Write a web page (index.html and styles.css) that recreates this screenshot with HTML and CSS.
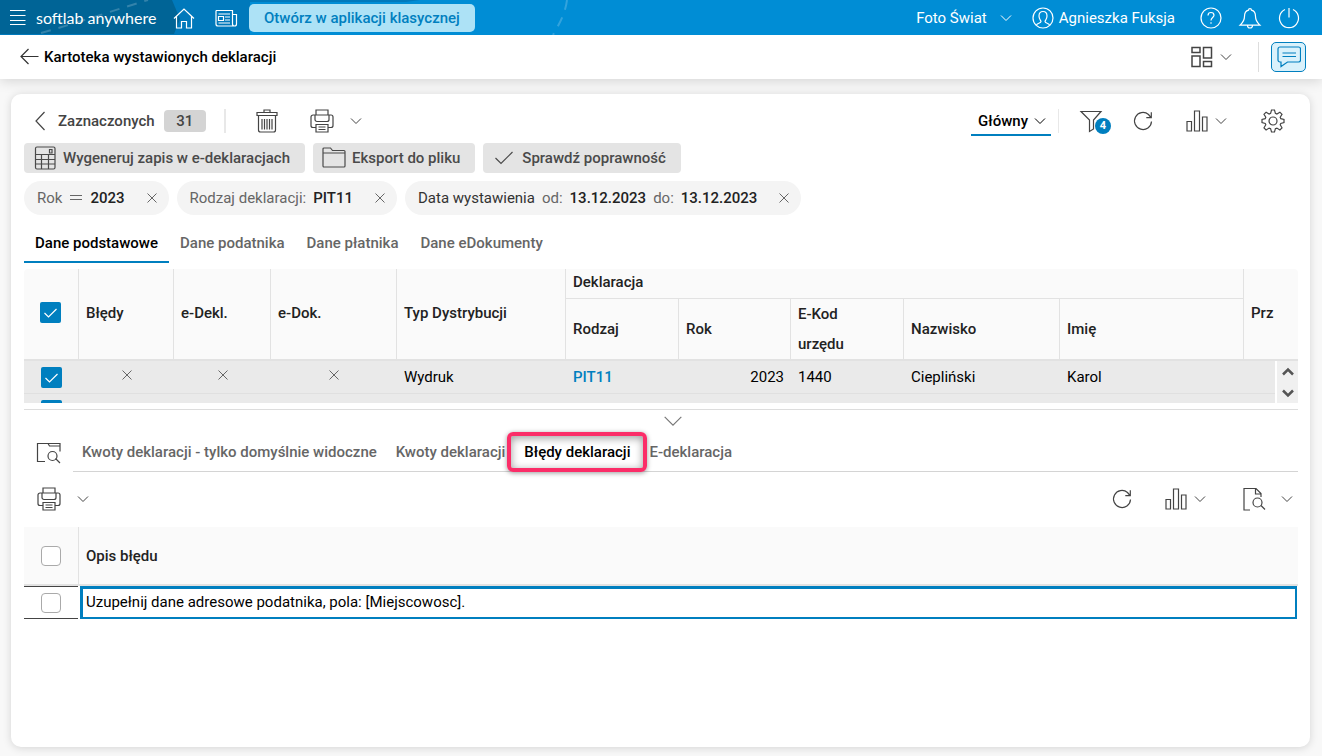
FILE: index.html
```html
<!DOCTYPE html>
<html lang="pl">
<head>
    <meta charset="utf-8">
    <title>Kartoteka wystawionych deklaracji</title>
    <link rel="stylesheet" href="styles.css">
</head>
<body>
    <!-- icon set -->
    <svg class="icon-set" aria-hidden="true">
        <symbol id="i-menu" viewBox="0 0 24 24"><path d="M4 4.500h15.500M4 9.500h15.500M4 14.500h15.500M4 18.500h15.500"/></symbol>
        <symbol id="i-home" viewBox="0 0 24 24"><path d="M2 12.500 12 3l10 9.500M4.500 10.500V22h5v-6.500h5V22h5V10.500"/></symbol>
        <symbol id="i-news" viewBox="0 0 24 24"><path d="M2 4.500h16.500V18a2 2 0 0 0 4 0V8.500h-4M2 4.500V18a2 2 0 0 0 2 2h16.500M4.500 8h11.500M4.500 10.500h5v4h-5zM11 11h5M11 14h5M4.500 17h11.500"/></symbol>
        <symbol id="i-down" viewBox="0 0 12 12"><path d="M1 3.500 6 8.500 11 3.500"/></symbol>
        <symbol id="i-user" viewBox="0 0 24 24"><circle cx="12" cy="12" r="10"/><path d="M5.500 19c.5-2 4.500-1.500 4.500-3.500 0-1-2-2-2-5.500 0-3 1.500-4.500 4-4.500s4 1.500 4 4.500c0 3.500-2 4.500-2 5.500 0 2 4 1.500 4.500 3.500"/></symbol>
        <symbol id="i-help" viewBox="0 0 24 24"><circle cx="12" cy="12" r="10"/><path d="M9 9.500C9 7.500 10.200 6.500 12 6.500s3 1.200 3 2.800c0 2.200-3 2.400-3 5.200M12 16.300v1.500"/></symbol>
        <symbol id="i-bell" viewBox="0 0 24 24"><path d="M10.500 4.200a1.500 1.500 0 0 1 3 0c3 .8 4 3 4 6 0 5 2 6.500 4.500 9H2c2.500-2.500 4.500-4 4.500-9 0-3 1-5.200 4-6zM9.500 19.500a2.500 2.500 0 0 0 5 0"/></symbol>
        <symbol id="i-power" viewBox="0 0 24 24"><path d="M12 2v9.500M8 3.500a9.500 9.500 0 1 0 8 0"/></symbol>
        <symbol id="i-back" viewBox="0 0 24 24"><path d="M21.500 11.500H4M11.500 4 4 11.500l7.500 7.500"/></symbol>
        <symbol id="i-layout" viewBox="0 0 24 24"><path d="M2 2.500h8v5H2zM2 11h8v10.500H2zM13.500 2.500h8V13h-8zM13.500 16.500h8v5h-8z"/></symbol>
        <symbol id="i-chat" viewBox="0 0 24 24"><path d="M3 2h18.500a2 2 0 0 1 2 2v11a2 2 0 0 1-2 2H10.500L4 21.500V17H3a2 2 0 0 1-2-2V4a2 2 0 0 1 2-2zM5.500 8h13.500M5.500 11.500h13.500"/></symbol>
        <symbol id="i-left" viewBox="0 0 12 24"><path d="M10.500 3 2 12l8.500 9"/></symbol>
        <symbol id="i-trash" viewBox="0 0 24 24"><path d="M2 3.500h20v3H2zM9 3.500V1h6v2.500M3.500 6.500V21a2 2 0 0 0 2 2h13a2 2 0 0 0 2-2V6.500M7 10v10.500M9.500 10v10.500M12 10v10.500M14.500 10v10.500M17 10v10.500"/></symbol>
        <symbol id="i-printer" viewBox="0 0 24 24"><path d="M6 6V1h12v5M5 6h14v4.500a2 2 0 0 1-2 2H7a2 2 0 0 1-2-2zM5 6H3a2 2 0 0 0-2 2v8.500a2 2 0 0 0 2 2h3M19 6h2a2 2 0 0 1 2 2v8.500a2 2 0 0 1-2 2h-3M6 15.500h12v7.500H6zM8.500 18h7M8.500 20.500h7"/></symbol>
        <symbol id="i-filter" viewBox="0 0 24 24"><path d="M2 2.500h20L14.500 11v9l-4 2.500V11z"/></symbol>
        <symbol id="i-refresh" viewBox="0 0 24 24"><path d="M20.500 12.500a8.500 8.500 0 1 1-3-7l2.500 3M20.300 3.300V8.700h-5"/></symbol>
        <symbol id="i-chart" viewBox="0 0 24 24"><path d="M2 12.500h4.500v9.500H2zM9.500 2h5v20h-5zM17.500 8h4.500v14h-4.500z"/></symbol>
        <symbol id="i-gear" viewBox="0 0 24 24"><circle cx="12" cy="12" r="4"/><path d="M9.600 4.300 10.500 1h3l.9 3.300 1.500.7 3-1.800 2.100 2.100L19.200 8.300l.6 1.400 3.200.8v3l-3.200.9-.6 1.400 1.800 3-2.100 2.100-3-1.800-1.500.6-.9 3.300h-3l-.9-3.300-1.500-.6-3 1.800L3 18.800l1.800-3-.6-1.400L1 13.500v-3l3.200-.8.6-1.400L3 5.300l2.100-2.100 3 1.800z"/></symbol>
        <symbol id="i-calc" viewBox="0 0 24 24"><rect x="2.500" y="1" width="19.500" height="22" rx="1.500"/><path d="M2.500 8.500H22M2.500 13.500H22M2.500 18H22M8.500 8.500V23M15.500 8.500V23M16.500 3.500h2.500v3.500h-2.500z"/></symbol>
        <symbol id="i-folder" viewBox="0 0 24 24"><path d="M1 20V3a1 1 0 0 1 1-1h6.500L10.500 4.500H22a1 1 0 0 1 1 1V20a1 1 0 0 1-1 1H2a1 1 0 0 1-1-1zM1 7h22"/></symbol>
        <symbol id="i-check" viewBox="0 0 24 24"><path d="M3.500 12 9 17.500 20.500 6"/></symbol>
        <symbol id="i-x" viewBox="0 0 12 12"><path d="M1.500 1.500l9 9M10.500 1.500l-9 9"/></symbol>
        <symbol id="i-equal" viewBox="0 0 14 12"><path d="M1 3.500h12M1 7.500h12"/></symbol>
        <symbol id="i-preview" viewBox="0 0 26 24"><path d="M9 20.500H1.500V2.500h10.500l1.500 2.500H24M12 2.500h12v8M19.500 17.500l4.500 4.500"/><circle cx="16.500" cy="15" r="4.500"/></symbol>
        <symbol id="i-doc" viewBox="0 0 24 24"><path d="M8 23H2V1.500h12l5 5V10M13.500 1.500V7H19M19 18.500l4 4"/><circle cx="15.500" cy="15.500" r="4.500"/></symbol>
    </svg>

    <header class="topbar">
        <svg class="topbar-art" aria-hidden="true">
            <path fill="#0079bb" d="M0 0h420l-14 2H250v33H0z"/>
            <path fill="#006496" d="M0 0h172l8 19-6 15H0z"/>
            <path class="dashes" d="M41 33C80 22 115 10 148 0M567 0c-2 15-8 24-14 35"/>
        </svg>
        <button class="btn menu" aria-label="Menu"><svg class="icon"><use href="#i-menu"/></svg></button>
        <a class="logo" href="#">softlab anywhere</a>
        <a class="top-link home" href="#" aria-label="Start"><svg class="icon"><use href="#i-home"/></svg></a>
        <a class="top-link news" href="#" aria-label="Aktualności"><svg class="icon"><use href="#i-news"/></svg></a>
        <button class="classic">Otwórz w aplikacji klasycznej</button>
        <div class="top-right">
            <button class="btn company">Foto Świat <svg class="arrow"><use href="#i-down"/></svg></button>
            <button class="btn user"><svg class="icon"><use href="#i-user"/></svg>Agnieszka Fuksja</button>
            <div class="top-icons">
                <button class="btn" aria-label="Pomoc"><svg class="icon"><use href="#i-help"/></svg></button>
                <button class="btn" aria-label="Powiadomienia"><svg class="icon"><use href="#i-bell"/></svg></button>
                <button class="btn" aria-label="Wyloguj"><svg class="icon"><use href="#i-power"/></svg></button>
            </div>
        </div>
    </header>

    <div class="titlebar">
        <a class="back" href="#" aria-label="Wstecz"><svg class="icon"><use href="#i-back"/></svg></a>
        <h1>Kartoteka wystawionych deklaracji</h1>
        <button class="btn layout" aria-label="Układ"><svg class="icon"><use href="#i-layout"/></svg><svg class="arrow"><use href="#i-down"/></svg></button>
        <button class="chat" aria-label="Czat"><svg class="icon"><use href="#i-chat"/></svg></button>
    </div>

    <main class="card">
        <div class="toolbar">
            <button class="btn selected"><svg class="icon left"><use href="#i-left"/></svg>Zaznaczonych <span class="count">31</span></button>
            <span class="sep"></span>
            <button class="btn trash" aria-label="Usuń"><svg class="icon"><use href="#i-trash"/></svg></button>
            <button class="btn print" aria-label="Drukuj"><svg class="icon"><use href="#i-printer"/></svg><svg class="arrow"><use href="#i-down"/></svg></button>
            <div class="toolbar-right">
                <button class="btn view">Główny <svg class="arrow"><use href="#i-down"/></svg></button>
                <span class="sep thin"></span>
                <button class="btn filter" aria-label="Filtry"><svg class="icon"><use href="#i-filter"/></svg><span class="dot">4</span></button>
                <button class="btn refresh" aria-label="Odśwież"><svg class="icon"><use href="#i-refresh"/></svg></button>
                <button class="btn chart" aria-label="Wykres"><svg class="icon"><use href="#i-chart"/></svg><svg class="arrow"><use href="#i-down"/></svg></button>
                <button class="btn gear" aria-label="Ustawienia"><svg class="icon"><use href="#i-gear"/></svg></button>
            </div>
        </div>

        <div class="actions">
            <button class="action"><svg class="icon"><use href="#i-calc"/></svg>Wygeneruj zapis w e-deklaracjach</button>
            <button class="action"><svg class="icon"><use href="#i-folder"/></svg>Eksport do pliku</button>
            <button class="action"><svg class="icon"><use href="#i-check"/></svg>Sprawdź poprawność</button>
        </div>

        <div class="chips">
            <div class="chip">Rok <svg class="equal"><use href="#i-equal"/></svg><b>2023</b><button class="btn" aria-label="Usuń filtr"><svg class="cross"><use href="#i-x"/></svg></button></div>
            <div class="chip">Rodzaj deklaracji: <b>PIT11</b><button class="btn" aria-label="Usuń filtr"><svg class="cross"><use href="#i-x"/></svg></button></div>
            <div class="chip"><span class="name">Data wystawienia</span> od: <b>13.12.2023</b> do: <b>13.12.2023</b><button class="btn" aria-label="Usuń filtr"><svg class="cross"><use href="#i-x"/></svg></button></div>
        </div>

        <nav class="tabs">
            <button class="tab active">Dane podstawowe</button>
            <button class="tab">Dane podatnika</button>
            <button class="tab">Dane płatnika</button>
            <button class="tab">Dane eDokumenty</button>
        </nav>

        <div class="grid">
            <table class="main-table">
                <colgroup>
                    <col class="c-check"><col class="c-err"><col class="c-dekl"><col class="c-dok"><col class="c-typ"><col class="c-rodzaj"><col class="c-rok"><col class="c-kod"><col class="c-nazw"><col class="c-imie"><col>
                </colgroup>
                <thead>
                    <tr>
                        <th rowspan="2" class="check"><input type="checkbox" aria-label="Zaznacz wszystkie" checked></th>
                        <th rowspan="2">Błędy</th>
                        <th rowspan="2">e-Dekl.</th>
                        <th rowspan="2">e-Dok.</th>
                        <th rowspan="2">Typ Dystrybucji</th>
                        <th colspan="5" class="group">Deklaracja</th>
                        <th rowspan="2">Prz</th>
                    </tr>
                    <tr class="sub">
                        <th>Rodzaj</th>
                        <th>Rok</th>
                        <th>E-Kod<br>urzędu</th>
                        <th>Nazwisko</th>
                        <th>Imię</th>
                    </tr>
                </thead>
                <tbody>
                    <tr>
                        <td class="check"><input type="checkbox" aria-label="Zaznacz wiersz" checked></td>
                        <td class="mark"><svg class="cross"><use href="#i-x"/></svg></td>
                        <td class="mark"><svg class="cross"><use href="#i-x"/></svg></td>
                        <td class="mark"><svg class="cross"><use href="#i-x"/></svg></td>
                        <td>Wydruk</td>
                        <td><a href="#">PIT11</a></td>
                        <td class="num">2023</td>
                        <td>1440</td>
                        <td>Ciepliński</td>
                        <td>Karol</td>
                        <td></td>
                    </tr>
                    <tr>
                        <td class="check"><input type="checkbox" aria-label="Zaznacz wiersz" checked></td>
                        <td colspan="10"></td>
                    </tr>
                </tbody>
            </table>
            <div class="scroller">
                <button class="btn" aria-label="W górę"><svg class="arrow up"><use href="#i-down"/></svg></button>
                <button class="btn" aria-label="W dół"><svg class="arrow"><use href="#i-down"/></svg></button>
            </div>
        </div>

        <button class="splitter" aria-label="Zwiń"><svg><use href="#i-down"/></svg></button>

        <div class="details-head">
            <button class="btn preview" aria-label="Podgląd"><svg class="icon"><use href="#i-preview"/></svg></button>
            <nav class="detail-tabs">
                <button class="tab">Kwoty deklaracji - tylko domyślnie widoczne</button>
                <button class="tab">Kwoty deklaracji</button>
                <button class="tab active">Błędy deklaracji</button>
                <button class="tab">E-deklaracja</button>
            </nav>
        </div>

        <div class="toolbar details-toolbar">
            <button class="btn print" aria-label="Drukuj"><svg class="icon"><use href="#i-printer"/></svg><svg class="arrow"><use href="#i-down"/></svg></button>
            <div class="toolbar-right">
                <button class="btn refresh" aria-label="Odśwież"><svg class="icon"><use href="#i-refresh"/></svg></button>
                <button class="btn chart" aria-label="Wykres"><svg class="icon"><use href="#i-chart"/></svg><svg class="arrow"><use href="#i-down"/></svg></button>
                <button class="btn doc" aria-label="Dokument"><svg class="icon"><use href="#i-doc"/></svg><svg class="arrow"><use href="#i-down"/></svg></button>
            </div>
        </div>

        <table class="error-table">
            <colgroup><col class="c-check"><col></colgroup>
            <thead>
                <tr>
                    <th class="check"><input type="checkbox" aria-label="Zaznacz wszystkie"></th>
                    <th>Opis błędu</th>
                </tr>
            </thead>
            <tbody>
                <tr>
                    <td class="check"><input type="checkbox" aria-label="Zaznacz wiersz"></td>
                    <td><div class="cell">Uzupełnij dane adresowe podatnika, pola: [Miejscowosc].</div></td>
                </tr>
            </tbody>
        </table>
    </main>
</body>
</html>
```
FILE: styles.css
```css
* {
    box-sizing: border-box;
}

body {
    margin: 0;
    min-height: 100vh;
    display: flex;
    flex-direction: column;
    background: #f8f8f8;
    color: #000;
    font-family: Roboto, sans-serif;
    font-size: 15px;
    line-height: 20px;
}

button {
    font: inherit;
    color: inherit;
    cursor: pointer;
}

.btn {
    display: flex;
    align-items: center;
    padding: 0;
    border: 0;
    background: none;
    white-space: nowrap;
}

/* icons */
.icon-set {
    display: none;
}

svg {
    flex: none;
    fill: none;
    stroke: currentColor;
    stroke-width: 1.2;
}

.icon {
    width: 24px;
    height: 24px;
}

.arrow {
    width: 12px;
    height: 12px;
    stroke-width: 1;
}

.cross {
    width: 12px;
    height: 12px;
    stroke-width: 1;
}

/* top bar */
.topbar {
    position: relative;
    display: flex;
    align-items: center;
    height: 35px;
    padding-right: 21px;
    background: #008dd5;
    color: #fff;
}

.topbar > * {
    position: relative;
}

.topbar .topbar-art {
    position: absolute;
    left: 0;
    top: 0;
    width: 600px;
    height: 35px;
    stroke: none;
}

.topbar .dashes {
    stroke: rgba(255, 255, 255, 0.2);
    stroke-width: 2;
    stroke-dasharray: 10 8;
}

.menu {
    margin-left: 6px;
}

.logo {
    width: 136px;
    margin-left: 6px;
    color: #fff;
    font-family: Lato, sans-serif;
    font-size: 16px;
    text-decoration: none;
}

.top-link {
    display: flex;
    margin-right: 18px;
    color: #fff;
}

.top-link.news {
    margin-right: 11px;
}

.classic {
    height: 28px;
    padding: 0 15px;
    border: 0;
    border-radius: 5px;
    background: #ade2f6;
    color: #007fbf;
    font-weight: 500;
}

.top-right {
    display: flex;
    align-items: center;
    margin-left: auto;
}

.company {
    gap: 13px;
    margin-right: 19px;
}

.user {
    gap: 4px;
    margin-right: 24px;
}

.top-icons {
    display: flex;
    gap: 15px;
}

/* page title */
.titlebar {
    display: flex;
    align-items: center;
    height: 44px;
    padding: 0 16px 0 17px;
    background: #fff;
    box-shadow: 0 2px 12px rgba(0, 0, 0, 0.15);
}

.titlebar h1 {
    margin: 0 0 0 3px;
    font-size: 15px;
    font-weight: 500;
}

.back {
    display: flex;
    color: #333;
}

.layout {
    gap: 6px;
    margin: 0 26px 0 auto;
    color: #444;
}

.layout .icon {
    stroke-width: 1.5;
}

.chat {
    position: relative;
    display: flex;
    align-items: center;
    justify-content: center;
    width: 35px;
    height: 30px;
    padding: 0;
    margin-left: 13px;
    border: 1px solid #007fbf;
    border-radius: 5px;
    background: #d9f1fb;
    color: #007fbf;
}

.chat::before {
    content: "";
    position: absolute;
    left: -14px;
    width: 1px;
    height: 30px;
    background: #ddd;
}

/* main card */
.card {
    flex: 1;
    margin: 15px 12px 9px 11px;
    padding: 10px 12px 0 13px;
    border-radius: 10px;
    background: #fff;
    box-shadow: 0 1px 8px rgba(0, 0, 0, 0.15);
}

.toolbar {
    display: flex;
    align-items: center;
    height: 34px;
    color: #444;
}

.toolbar-right {
    display: flex;
    align-items: center;
    margin-left: auto;
}

.selected {
    margin-left: 10px;
    font-weight: 500;
}

.icon.left {
    width: 12px;
    margin-right: 12px;
}

.count {
    width: 42px;
    margin-left: 9px;
    border-radius: 4px;
    background: #d4d4d4;
    line-height: 22px;
    text-align: center;
}

.sep {
    width: 2px;
    height: 24px;
    margin-left: 18px;
    background: #e8e8e8;
}

.sep.thin {
    width: 1px;
    margin: 0 20px 0 7px;
}

.trash {
    margin: 0 31px 0 29px;
}

.print {
    gap: 16px;
}

.view {
    gap: 6px;
    height: 30px;
    padding: 2px 5px 0 7px;
    border-bottom: 2px solid #007fbf;
    color: #000;
    font-weight: 500;
}

.filter {
    position: relative;
    margin-right: 28px;
}

.dot {
    position: absolute;
    left: 16px;
    top: 9px;
    width: 16px;
    border-radius: 8px;
    background: #007fbf;
    color: #fff;
    font-size: 11px;
    font-weight: 700;
    line-height: 16px;
    text-align: center;
}

.refresh {
    margin-right: 30px;
}

.chart {
    gap: 6px;
    margin-right: 34px;
}

.gear {
    margin-right: 13px;
}

.actions {
    display: flex;
    gap: 8px;
    margin-top: 5px;
}

.action {
    display: flex;
    align-items: center;
    gap: 6px;
    height: 30px;
    padding: 0 15px 0 9px;
    border: 0;
    border-radius: 4px;
    background: #e4e4e4;
    color: #4a4a4a;
    font-weight: 500;
}

.chips {
    display: flex;
    gap: 8px;
    margin-top: 8px;
}

.chip {
    display: flex;
    align-items: center;
    gap: 7px;
    height: 34px;
    padding: 0 11px 0 13px;
    border-radius: 17px;
    background: #f4f4f4;
    color: #666;
}

.chip b {
    color: #222;
    font-weight: 500;
}

.chip .name {
    color: #333;
}

.chip .btn {
    margin-left: 14px;
}

.equal {
    width: 14px;
    height: 12px;
    stroke-width: 1;
}

/* tabs */
.tabs {
    display: flex;
    height: 40px;
    margin: 8px 0 6px;
}

.tab {
    padding: 2px 11px 0;
    border: 0;
    border-bottom: 2px solid transparent;
    background: none;
    color: #666;
    font-weight: 500;
    white-space: nowrap;
}

.tab.active {
    border-bottom-color: #007fbf;
    color: #000;
}

/* tables */
.grid {
    position: relative;
    height: 134px;
    overflow: hidden;
    border-radius: 4px 4px 0 0;
}

table {
    width: 100%;
    border-collapse: separate;
    border-spacing: 0;
    table-layout: fixed;
}

.c-check { width: 54px; }
.c-err { width: 95px; }
.c-dekl { width: 97px; }
.c-dok { width: 126px; }
.c-typ { width: 169px; }
.c-rodzaj { width: 113px; }
.c-rok { width: 112px; }
.c-kod { width: 113px; }
.c-nazw { width: 156px; }
.c-imie { width: 184px; }

th, td {
    padding: 0 6px 0 8px;
    text-align: left;
}

th {
    padding: 0 6px 0 7px;
    border-left: 1px solid #e2e2e2;
    border-bottom: 2px solid #e2e2e2;
    background: #fafafa;
    color: #222;
    font-weight: 500;
    line-height: 30px;
}

.main-table th[rowspan] {
    padding-bottom: 2px;
}

th.group {
    height: 30px;
    padding-bottom: 2px;
    border-bottom-width: 1px;
    line-height: 27px;
}

.sub th {
    height: 62px;
}

.main-table td {
    height: 33px;
    border-bottom: 1px solid #e0e0e0;
    background: #eaeaea;
}

.main-table a {
    color: #007fbf;
    font-weight: 500;
    text-decoration: none;
}

td.num {
    text-align: right;
}

td.mark {
    color: #666;
    text-align: center;
    line-height: 12px;
}

.mark .cross {
    margin-bottom: 4px;
}

th.check, td.check {
    padding: 0;
    border-left: 0;
    text-align: center;
    line-height: 0;
}

.main-table th.check {
    padding: 0 1px 4px 0;
}

input[type="checkbox"] {
    appearance: none;
    width: 20px;
    height: 20px;
    margin: 0;
    border: 1px solid #aaa;
    border-radius: 4px;
    background: #fff;
    vertical-align: middle;
}

input[type="checkbox"]:checked {
    width: 21px;
    height: 21px;
    border: 0;
    border-radius: 2px;
    background: #007fbf url("data:image/svg+xml,%3Csvg xmlns='http://www.w3.org/2000/svg' viewBox='0 0 21 21'%3E%3Cpath d='M4.500 11l4 4 8-8' fill='none' stroke='white' stroke-width='1.200'/%3E%3C/svg%3E");
}

.scroller {
    position: absolute;
    right: 0;
    bottom: 0;
    display: flex;
    flex-direction: column;
    justify-content: space-around;
    align-items: center;
    width: 23px;
    height: 42px;
    border-left: 2px solid #fff;
    background: #f0f0f0;
    color: #555;
}

.scroller .arrow {
    stroke-width: 2.5;
}

.up {
    transform: rotate(180deg);
}

/* lower panel */
.splitter {
    display: flex;
    justify-content: center;
    align-items: center;
    width: 100%;
    height: 23px;
    margin-top: 6px;
    padding: 0 0 0 23px;
    border: 0;
    border-top: 1px solid #ddd;
    background: none;
    color: #777;
}

.splitter svg {
    width: 20px;
    height: 20px;
    stroke-width: 0.7;
}

.details-head {
    display: flex;
    height: 40px;
}

.preview {
    width: 49px;
    padding: 2px 0 0 12px;
    color: #444;
}

.preview .icon {
    width: 26px;
}

.detail-tabs {
    display: flex;
    flex: 1;
    gap: 1px;
    border-bottom: 1px solid #d4d4d4;
}

.detail-tabs .tab {
    padding: 0 9px;
    border: 0;
}

.detail-tabs .active {
    position: relative;
}

/* pink frame over the current tab */
.detail-tabs .active::after {
    content: "";
    position: absolute;
    inset: 0 -8px -1px -8px;
    border: 4px solid #fb2d68;
    border-radius: 6px;
    box-shadow: 0 1px 5px rgba(0, 0, 0, 0.4), inset 0 2px 8px rgba(0, 0, 0, 0.4);
}

.details-toolbar {
    height: 53px;
    margin-bottom: 2px;
    padding-left: 13px;
}

.details-toolbar .chart {
    margin-right: 36px;
}

.doc {
    gap: 15px;
    margin-right: 5px;
}

.error-table th {
    height: 59px;
}

.error-table td {
    height: 33px;
    padding: 0;
}

.error-table td.check {
    border-top: 1px solid #444;
    border-bottom: 1px solid #444;
}

.cell {
    height: 33px;
    margin: 0 1px 0 2px;
    padding-left: 3px;
    border: 2px solid #007fbf;
    border-width: 3px 2px 2px 3px;
    line-height: 26px;
}
```
